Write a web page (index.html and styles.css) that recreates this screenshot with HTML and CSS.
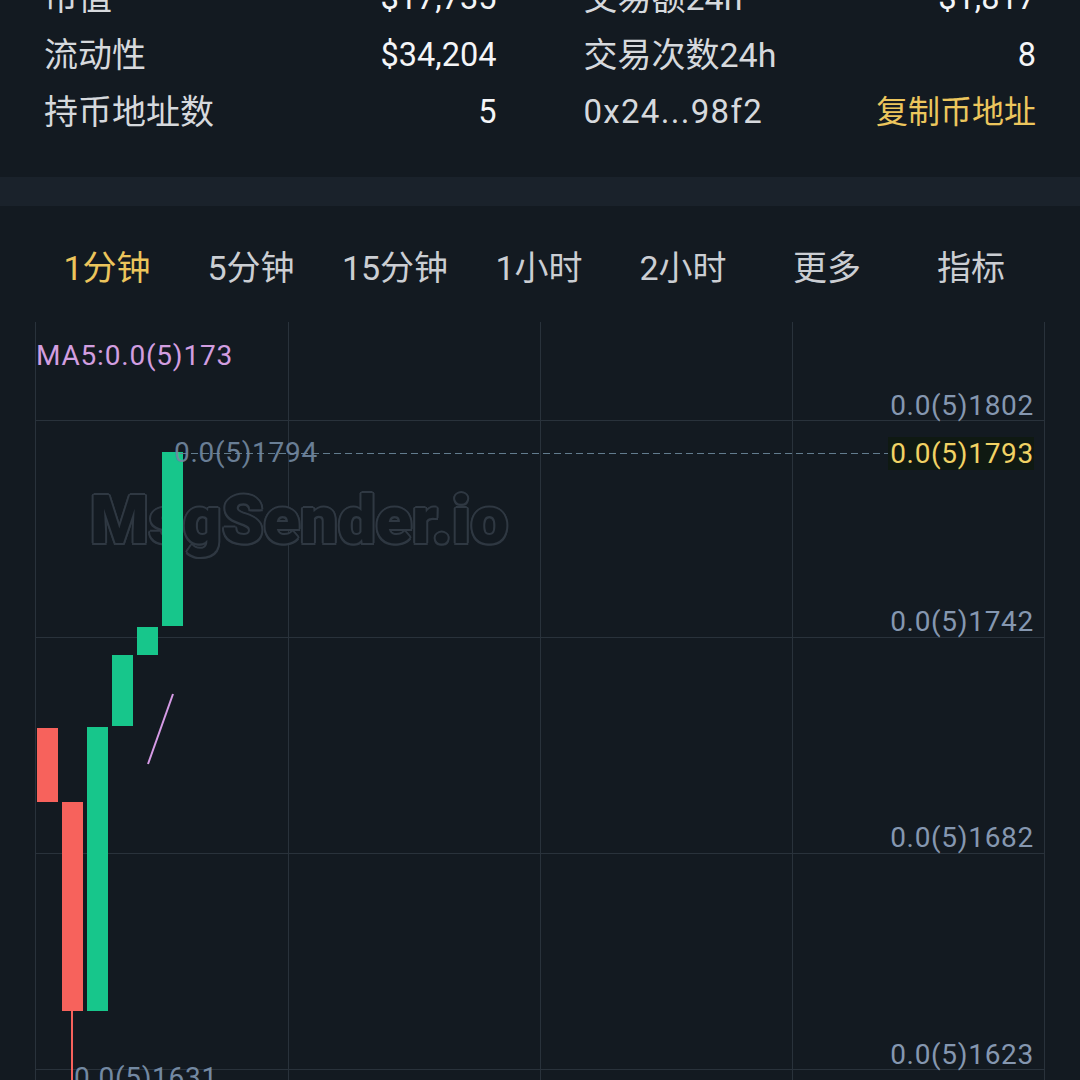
FILE: index.html
```html
<!DOCTYPE html>
<html lang="zh-CN">
<head>
<meta charset="utf-8">
<title>K线</title>
<link rel="stylesheet" href="styles.css">
</head>
<body>
<section class="stats">
  <div class="col">
    <div class="row"><span class="label">市值</span><span class="value">$17,735</span></div>
    <div class="row"><span class="label">流动性</span><span class="value">$34,204</span></div>
    <div class="row"><span class="label">持币地址数</span><span class="value">5</span></div>
  </div>
  <div class="col">
    <div class="row"><span class="label">交易额24h</span><span class="value">$1,817</span></div>
    <div class="row"><span class="label">交易次数24h</span><span class="value">8</span></div>
    <div class="row"><span class="label addr">0x24...98f2</span><span class="link">复制币地址</span></div>
  </div>
</section>
<div class="divider"></div>
<nav class="tabs">
  <span class="tab active">1分钟</span>
  <span class="tab">5分钟</span>
  <span class="tab">15分钟</span>
  <span class="tab">1小时</span>
  <span class="tab">2小时</span>
  <span class="tab">更多</span>
  <span class="tab">指标</span>
</nav>
<div class="chart">
  <div class="vline v0"></div>
  <div class="vline v1"></div>
  <div class="vline v2"></div>
  <div class="vline v3"></div>
  <div class="vline v4"></div>
  <div class="hline h0"></div>
  <div class="hline h1"></div>
  <div class="hline h2"></div>
  <div class="hline h3"></div>

  <div class="watermark">MsgSender.io</div>

  <div class="ma-label">MA5:0.0(5)173</div>

  <div class="axis a0">0.0(5)1802</div>
  <div class="axis a1">0.0(5)1742</div>
  <div class="axis a2">0.0(5)1682</div>
  <div class="axis a3">0.0(5)1623</div>

  <div class="wick wick-red" style="left:36px;top:689px;height:80px"></div>
  <div class="candle red" style="left:2px;top:406px;height:74px"></div>
  <div class="candle red" style="left:27px;top:480px;height:209px"></div>
  <div class="candle green" style="left:52px;top:405px;height:284px"></div>
  <div class="candle green" style="left:77px;top:333px;height:71px"></div>
  <div class="candle green" style="left:102px;top:305px;height:28px"></div>
  <div class="candle green" style="left:127px;top:130px;height:174px"></div>

  <svg class="ma-line" width="1010" height="758" viewBox="0 0 1010 758">
    <line x1="113" y1="442" x2="138" y2="372" stroke="#d69be6" stroke-width="2"/>
  </svg>

  <div class="dash"></div>
  <div class="high-label">0.0(5)1794</div>
  <div class="low-label">0.0(5)1631</div>
  <div class="current">0.0(5)1793</div>
</div>
</body>
</html>
```
FILE: styles.css
```css
html, body {
  margin: 0;
  padding: 0;
}
body {
  width: 1080px;
  height: 1080px;
  overflow: hidden;
  background: #131a21;
  font-family: Roboto, "Noto Sans CJK SC", sans-serif;
}

.stats {
  display: grid;
  grid-template-columns: 1fr 1fr;
  column-gap: 87px;
  padding: 0 44px 37px;
  margin-top: -31px;
}
.col {
  display: flex;
  flex-direction: column;
}
.row {
  height: 57px;
  display: flex;
  align-items: center;
  justify-content: space-between;
  font-size: 34px;
  line-height: 42px;
}
.label { color: #d6d9dd; }
.value {
  color: #f4f5f7;
  font-size: 32.5px;
}
.addr {
  font-size: 33px;
  letter-spacing: 1.3px;
}
.link {
  color: #ecc65d;
  font-size: 32px;
}

.divider {
  height: 29px;
  background: #1a222b;
}

.tabs {
  display: flex;
  align-items: center;
  box-sizing: border-box;
  height: 116px;
  padding: 2px 37px 0 35px;
}
.tab {
  flex: 1;
  text-align: center;
  font-size: 34px;
  color: #cbced3;
}
.tab.active { color: #ecc55c; }

.chart {
  position: relative;
  margin-left: 35px;
  width: 1010px;
  height: 758px;
  font-size: 28px;
  line-height: 32px;
  letter-spacing: 0.7px;
}
.vline {
  position: absolute;
  top: 0;
  bottom: 0;
  width: 1px;
  background: #29323b;
}
.v0 { left: 0; }
.v1 { left: 253px; }
.v2 { left: 505px; }
.v3 { left: 757px; }
.v4 { left: 1009px; }
.hline {
  position: absolute;
  left: 0;
  width: 1010px;
  height: 1px;
  background: #29323b;
}
.h0 { top: 98px; }
.h1 { top: 315px; }
.h2 { top: 531px; }
.h3 { top: 747px; }

.watermark {
  position: absolute;
  left: 55px;
  top: 158px;
  font-family: Roboto, sans-serif;
  font-weight: 900;
  font-size: 67px;
  line-height: 80px;
  letter-spacing: 0;
  color: #131a21;
  text-shadow:
    -2px 0 0 #2f3842, 2px 0 0 #2f3842,
    0 -2px 0 #2f3842, 0 2px 0 #2f3842,
    -1.5px -1.5px 0 #2f3842, 1.5px -1.5px 0 #2f3842,
    -1.5px 1.5px 0 #2f3842, 1.5px 1.5px 0 #2f3842;
}

.ma-label {
  position: absolute;
  left: 1px;
  top: 18px;
  color: #d29ee0;
  letter-spacing: 0.8px;
}

.axis {
  position: absolute;
  right: 11px;
  color: #8597b0;
}
.a0 { top: 68px; }
.a1 { top: 284px; }
.a2 { top: 500px; }
.a3 { top: 717px; }

.candle {
  position: absolute;
  width: 21px;
}
.red { background: #f7625c; }
.green { background: #17c68b; }
.wick {
  position: absolute;
  width: 2px;
}
.wick-red { background: #f7625c; }

.ma-line {
  position: absolute;
  left: 0;
  top: 0;
}

.dash {
  position: absolute;
  left: 145px;
  top: 131px;
  width: 708px;
  height: 1px;
  background: repeating-linear-gradient(to right, #627c8e 0 7px, transparent 7px 11px);
}
.high-label {
  position: absolute;
  left: 139px;
  top: 115px;
  color: #7389a2;
  opacity: 0.9;
}
.low-label {
  position: absolute;
  left: 39px;
  top: 740px;
  color: #7389a2;
}
.current {
  position: absolute;
  left: 853px;
  top: 115px;
  width: 146px;
  height: 33px;
  line-height: 33px;
  text-align: right;
  background: #0f1912;
  color: #f1d264;
}
```
